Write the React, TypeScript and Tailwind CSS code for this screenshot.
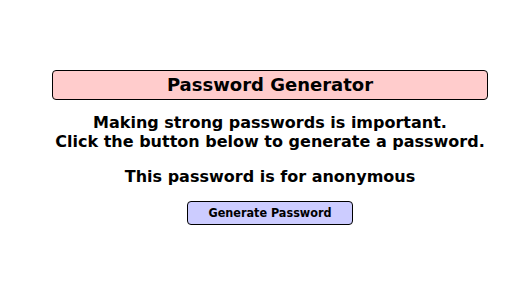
import React from "react";

const App = () => {
  const name = "anonymous";

  return (
    <div className="min-h-[308px] bg-white font-['DejaVu_Sans',sans-serif] font-bold text-black">
      <div className="ml-[52px] w-[436px] pt-[70px] text-center">
        <h1 className="h-[30px] rounded-[4px] border border-black bg-[#ffcccc] text-[18px] leading-[28px]">
          Password Generator
        </h1>
        <p className="mt-[13px] text-[16px] leading-[19px]">
          Making strong passwords is important.
          <br />
          Click the button below to generate a password.
        </p>
        <p className="mt-[16px] text-[16px] leading-[19px]">
          This password is for {name}
        </p>
        <button className="mt-[15px] h-[24px] w-[166px] rounded-[4px] border border-black bg-[#ccccff] font-['DejaVu_Sans_Condensed','DejaVu_Sans',sans-serif] text-[12.5px] leading-[22px] [font-stretch:condensed]">
          Generate Password
        </button>
      </div>
    </div>
  );
};

export default App;
